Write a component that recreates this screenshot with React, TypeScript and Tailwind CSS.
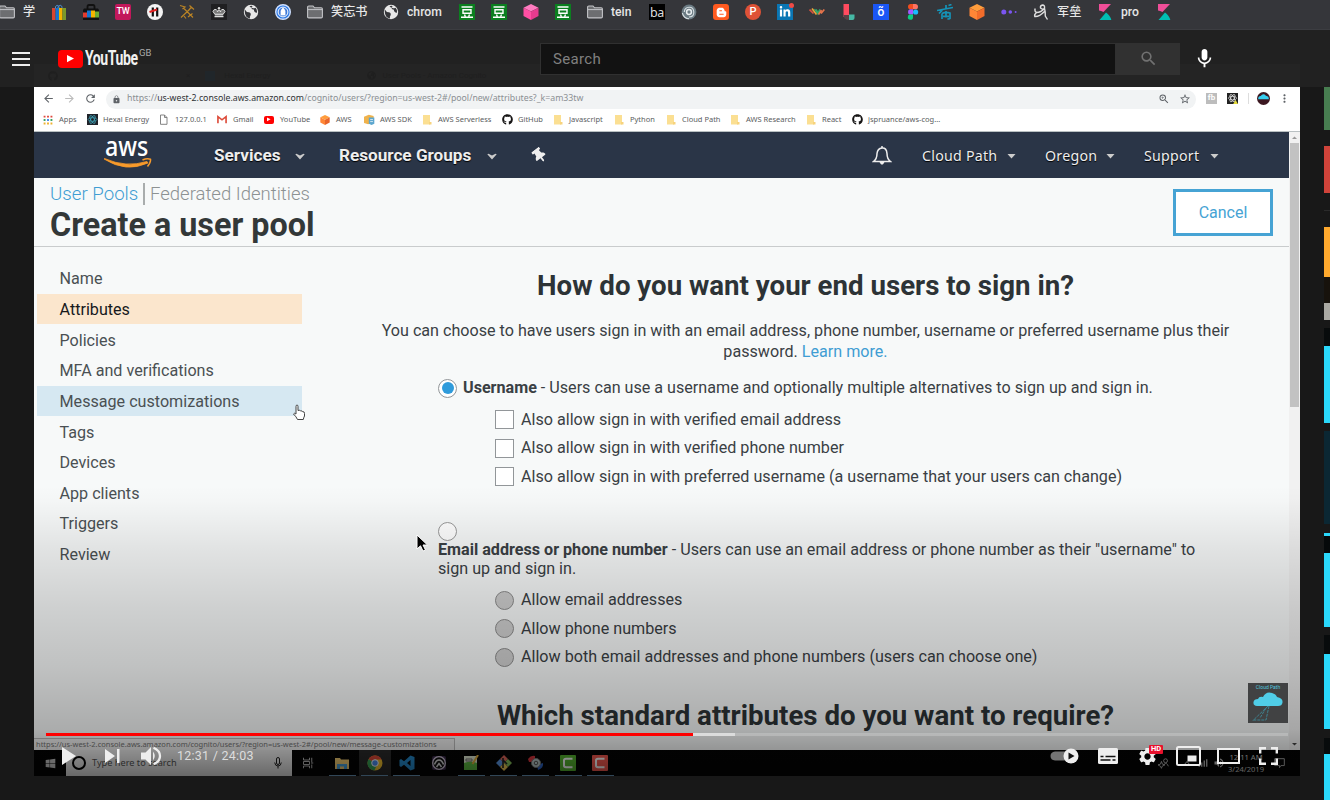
import React from "react";
import { FaGithub, FaBloggerB, FaLinkedinIn, FaGlobeAmericas, FaWindows, FaThumbtack } from "react-icons/fa";
import { MdMic, MdSearch, MdVolumeUp, MdSettings, MdLock, MdZoomIn, MdStarBorder, MdMoreVert, MdRefresh, MdArrowBack, MdArrowForward } from "react-icons/md";

const Svg = ({ children, w = 16, h = 16, vb = "0 0 16 16" }: { children: React.ReactNode; w?: number; h?: number; vb?: string }) => (
  <svg width={w} height={h} viewBox={vb} className="shrink-0" fill="none">{children}</svg>
);

const Folder = () => (
  <Svg>
    <path d="M.6 3.200Q.6 2 1.800 2H6L7.500 3.800H14.200Q15.400 3.800 15.400 5V12.700Q15.400 13.900 14.200 13.900H1.800Q.6 13.900 .6 12.700Z" fill="#6d6e71" stroke="#c3c4c7" strokeWidth="1.100" />
    <path d="M1 5.600H15" stroke="#c3c4c7" strokeWidth="1" />
  </Svg>
);
const Globe = () => (
  <Svg>
    <circle cx="8" cy="8" r="7.200" fill="#e8e8e8" />
    <path d="M1.800 5.500Q3.500 8.500 6 8.300Q8.500 9 7.500 11.500Q6.500 12.500 7 14.500Q2 13.500 1.800 8Z" fill="#35363a" />
    <path d="M6.500 2.300Q9 1.300 9.500 2.500Q8 4 9 5.200Q11.500 4.800 11 7Q12.500 9.500 14 8.500Q14.300 5.500 12.500 3.800Q10 5 8.500 3.500Q7.500 3.500 6.500 2.300Z" fill="#35363a" />
  </Svg>
);
const Dou = () => (
  <Svg>
    <rect width="16" height="16" fill="#0b7f1f" />
    <path d="M2.500 3H13.500M2 13.200H14M4 5.700H12V9.300H4ZM5.500 10.500L6.300 12.500M10.500 10.500L9.700 12.500" stroke="#fff" strokeWidth="1.400" />
  </Svg>
);
const Kib = () => (
  <Svg>
    <path d="M2 0H14L6.500 8Q4 6.500 2 6.500Z" fill="#f04e98" />
    <path d="M2.500 16L9 8.500Q13 11 14.300 16Z" fill="#00bfb3" />
  </Svg>
);
const Bag = ({ wide = false }: { wide?: boolean }) => wide ? (
  <Svg>
    <path d="M4.500 5V2.800Q4.500 1 6 1H10Q11.500 1 11.500 2.800V5" stroke="#111" strokeWidth="1.800" />
    <path d="M1 4.500H15L16 6V16H0V6Z" fill="#111" />
    <path d="M0 8.500H4V13.500H0Z" fill="#e33b2e" /><path d="M4 6.500H8V13.500H4Z" fill="#1574d0" /><path d="M8 6.500H12V13.500H8Z" fill="#f4b400" /><path d="M12 7.500H16V13.500H12Z" fill="#6cab32" />
  </Svg>
) : (
  <Svg>
    <path d="M4.500 5V2.500Q6 0 8 2.500V5M7 5V2.500Q9.500 0 11 2.500V5" stroke="#4b8ed0" strokeWidth="1" />
    <path d="M1 4H4.500V16H1Z" fill="#d8452f" /><path d="M4.500 4H8V16H4.500Z" fill="#1574d0" /><path d="M8 4H11.500V16H8Z" fill="#f4b400" /><path d="M11.500 4H15V16H11.500Z" fill="#7a9a2c" />
  </Svg>
);
const Box = ({ a, b, c }: { a: string; b: string; c: string }) => (
  <Svg>
    <path d="M8 0L15.500 3.700L8 7.500L0.500 3.700Z" fill={a} />
    <path d="M0.500 3.700L8 7.500V16L0.500 12Z" fill={b} />
    <path d="M15.500 3.700L8 7.500V16L15.500 12Z" fill={c} />
  </Svg>
);

const bar: { i: React.ReactNode; t?: string; w?: string }[] = [
  { i: <Folder />, t: "学", w: "w-3" },
  { i: <Bag /> },
  { i: <Bag wide /> },
  { i: <span className="flex size-4 items-center justify-center rounded-[2px] bg-[#c2185b] text-[9px] tracking-[-0.200px] text-white">TW</span> },
  { i: <Svg><circle cx="8" cy="8" r="8" fill="#f4f4f4" /><path d="M5.800 3.500V12.500M10.200 3.500V12.500" stroke="#111" strokeWidth="2.200" /><path d="M2.500 8L10 5.500" stroke="#e02020" strokeWidth="1.900" /></Svg> },
  { i: <Svg><path d="M2 13.500L10.500 5.500M4.500 4L14 13.500M1 1.500L6 3L3.500 5M10.500 1.500L15 5.500M9.500 6.500L12.500 3M5 12L7 14.500M9 13L13.500 9.500" stroke="#b98325" strokeWidth="1.200" /></Svg> },
  { i: <Svg><rect width="16" height="16" fill="#1f1f21" /><path d="M3.500 12.700H12.500M3.800 10.800H12.200" stroke="#ddd" strokeWidth="1.200" /><path d="M3.800 10.200L2 7.500Q3 4.600 5.200 5.500Q6.500 6.500 6.500 8Q7 6 8 6T9.500 8Q9.500 6.500 10.800 5.500Q13 4.600 14 7.500L12.200 10.200Z" fill="#777" stroke="#ddd" strokeWidth="1" /><circle cx="8" cy="4.200" r="1.200" fill="#ddd" /></Svg> },
  { i: <Globe /> },
  { i: <Svg><circle cx="8" cy="8" r="7.300" fill="#2f7ce8" stroke="#cfe0ff" strokeWidth="1.400" /><circle cx="8" cy="8" r="4.900" fill="#3f79d8" stroke="#fff" strokeWidth="1" /><path d="M6 6.500H10V11H6ZM6.800 7V5Q8 3.700 9.200 5V7" fill="#fff" stroke="#fff" strokeWidth=".8" /></Svg> },
  { i: <Folder />, t: "笑忘书", w: "w-9" },
  { i: <Globe />, t: "chrom", w: "w-9" },
  { i: <Dou /> },
  { i: <Dou /> },
  { i: <Box a="#ff7cc0" b="#ff4fa3" c="#e63b8e" /> },
  { i: <Dou /> },
  { i: <Folder />, t: "tein", w: "w-[22px]" },
  { i: <span className="flex size-4 items-end justify-center bg-black font-['Noto_Sans',sans-serif] text-[12.500px] font-normal leading-[15px] tracking-[-0.300px] text-[#ddd]">ba</span> },
  { i: <Svg><circle cx="8" cy="8" r="7.400" fill="#6b7b83" /><circle cx="8" cy="8" r="2.400" stroke="#e9eef0" strokeWidth="1.500" /><path d="M3.300 8Q3.500 3.400 8 3.200T12.800 8T8 13M1.300 9Q3 14.500 8 14.800" stroke="#d5dde0" strokeWidth="1.100" /></Svg> },
  { i: <span className="flex size-4 items-center justify-center rounded-[3px] bg-[#ff5a1f] text-[11px] text-white"><FaBloggerB /></span> },
  { i: <span className="flex size-4 items-center justify-center rounded-full bg-[#de5236] text-[11px] text-white">P</span> },
  { i: <span className="relative flex size-4 items-center justify-center bg-[#0a76b4] text-[12px] text-white"><FaLinkedinIn /><i className="absolute -right-[1px] -top-[1px] size-[5px] rounded-full bg-[#f04a45]" /></span> },
  { i: <Svg><path d="M.5 5.500L4.500 9.500" stroke="#d85140" strokeWidth="1.700" /><path d="M3 4.500L7.500 10.500" stroke="#e8a53a" strokeWidth="1.700" /><path d="M7 5.500L9 9.500L11 5.500" stroke="#2fa866" strokeWidth="1.700" /><path d="M9.500 10.500L12.500 6M12 9.500L15.300 5.500" stroke="#e5734b" strokeWidth="1.700" /><path d="M5.500 5L8 9" stroke="#3aa675" strokeWidth="1.300" /></Svg> },
  { i: <Svg><path d="M2.500 0H8V13H2.500Z" fill="#ff4b5f" /><path d="M2.500 11H8V16Q2.500 16 2.500 11Z" fill="#574145" /><path d="M8 10.500H13.500V14Q13.500 16 11.500 16H8Z" fill="#46b9a5" /></Svg> },
  { i: <span className="flex size-4 items-center justify-center bg-[#1a56f5] text-[12px] leading-none text-white">õ</span> },
  { i: <Svg><path d="M8 0H5.700a2.600 2.600 0 0 0 0 5.300H8Z" fill="#f24e1e" /><path d="M8 0h2.300a2.600 2.600 0 0 1 0 5.300H8Z" fill="#ff7262" /><path d="M8 5.300H5.700a2.600 2.600 0 0 0 0 5.300H8Z" fill="#a259ff" /><circle cx="10.600" cy="8" r="2.600" fill="#1abcfe" /><path d="M8 10.600H5.700a2.600 2.600 0 1 0 2.300 2.600Z" fill="#0acf83" /></Svg> },
  { i: <Svg><path d="M0 6.500L16 3.500M9 1V4.500M2 9.500L5.500 6M5 9.500V15M5 9.500Q9 7.500 13 9V14.500Q12 15.500 10.500 14.500M9 7V13.500M6 12.300H12M11.500 1.500L14.500 .5" stroke="#1593b8" strokeWidth="1.700" /></Svg> },
  { i: <Box a="#ff9d3c" b="#ff8636" c="#f26c2a" /> },
  { i: <Svg><circle cx="2.800" cy="8" r="2.500" fill="#7b55f0" /><circle cx="9.300" cy="8" r="1.800" fill="#7b55f0" /><circle cx="14.600" cy="8" r="1" fill="#7b55f0" /></Svg> },
  { i: <Svg><path d="M2 4.500Q1.500 7.500 3.500 8.500Q8 8.500 11.500 4.500Q12 1 9.500 1Q7 1.500 7.500 4Q9.500 6 11.500 4.500Q12.500 8 12.300 12L14.500 15.500M3.500 8.500Q1 10.500 1.800 12.500Q6 13 11.500 7.500" stroke="#dedede" strokeWidth="1.400" /></Svg>, t: "军垒", w: "w-6" },
  { i: <Kib />, t: "pro", w: "w-[19px]" },
  { i: <Kib /> },
];

const Note = () => <Svg w={10} h={11} vb="0 0 10 11"><path d="M1 1H8V10.500H1Z" fill="#fbdf92" /><path d="M7 8H9.500V10.500H7Z" fill="#f7d37d" /></Svg>;
const Yt = ({ c = "h-[8px] w-[10px] rounded-[2px]" }: { c?: string }) => (
  <span className={"flex shrink-0 items-center justify-center bg-[#f00] text-white " + c}><svg width="36%" viewBox="0 0 8 10"><path d="M0 1L8 5.200L0 9.500Z" fill="#fff" /></svg></span>
);
const Gh = () => <FaGithub className="size-[11px] shrink-0 text-[#171515]" />;
const Atom = () => (
  <Svg w={11} h={11}><rect width="16" height="16" fill="#20232a" /><g stroke="#3fa9bd" strokeWidth="1"><ellipse cx="8" cy="8" rx="6.500" ry="2.600" /><ellipse cx="8" cy="8" rx="6.500" ry="2.600" transform="rotate(60 8 8)" /><ellipse cx="8" cy="8" rx="6.500" ry="2.600" transform="rotate(120 8 8)" /></g></Svg>
);

const inner: { i: React.ReactNode; t: string; w: string }[] = [
  { i: <Svg w={10} h={10}><g><path d="M1 1h3v3H1zM6.500 1h3v3h-3zM12 1h3v3h-3z" fill="#e0483c" /><path d="M1 6.500h3v3H1zM12 6.500h3v3h-3z" fill="#3da364" /><path d="M6.500 6.500h3v3h-3z" fill="#4285f4" /><path d="M1 12h3v3H1zM6.500 12h3v3h-3zM12 12h3v3h-3z" fill="#efb22e" /></g></Svg>, t: "Apps", w: "w-11" },
  { i: <Atom />, t: "Hexal Energy", w: "w-[72px]" },
  { i: <Svg w={10} h={11} vb="0 0 10 11"><path d="M1.500 1H5.500L8 3.500V10.300H1.500ZM5.500 1V3.500H8" stroke="#777" strokeWidth=".9" /></Svg>, t: "127.0.0.1", w: "w-[58px]" },
  { i: <Svg w={10} h={9} vb="0 0 16 13"><path d="M1.500 12.500V2L8 7L14.500 2V12.500" stroke="#dd4b39" strokeWidth="2.600" /></Svg>, t: "Gmail", w: "w-[47px]" },
  { i: <Yt />, t: "YouTube", w: "w-14" },
  { i: <span className="flex size-[10px] items-center [&>svg]:size-[10px]"><Box a="#ff9d3c" b="#ff8636" c="#e8652a" /></span>, t: "AWS", w: "w-11" },
  { i: <Svg w={11} h={11}><path d="M0 4L7 1L14 3V12L6 15L0 13Z" fill="#efb24c" /><path d="M7 5H15V14L11 16L7 14Z" fill="#5da7cf" /><path d="M9 8H13M9 11H13" stroke="#fff" /></Svg>, t: "AWS SDK", w: "w-[58px]" },
  { i: <Note />, t: "AWS Serverless", w: "w-20" },
  { i: <Gh />, t: "GitHub", w: "w-[51px]" },
  { i: <Note />, t: "Javascript", w: "w-[61px]" },
  { i: <Note />, t: "Python", w: "w-[52px]" },
  { i: <Note />, t: "Cloud Path", w: "w-16" },
  { i: <Note />, t: "AWS Research", w: "w-[76px]" },
  { i: <Note />, t: "React", w: "w-[46px]" },
  { i: <Gh />, t: "jspruance/aws-cog...", w: "w-24" },
];

const Caret = () => <svg width="9" height="6" viewBox="0 0 9 6" className="mt-[2px] shrink-0"><path d="M0.500 1H8.500L4.500 5.500Z" fill="#ccc" /></svg>;
const Chevron = () => <svg width="10" height="7" viewBox="0 0 10 7" className="mt-[3px] shrink-0"><path d="M0.300 1.300L1.500 .8L5 2.500L8.500 .8L9.700 1.300L5 6.500Z" fill="#ccc" /></svg>;

const Check = ({ round = false, text }: { round?: boolean; text: string }) => (
  <div className="flex h-[28.500px] items-center gap-[7px]">
    <span className={round ? "size-[19px] rounded-full border border-[#8d8d8d] bg-[#cfcfcf]" : "size-[19px] border border-[#929699] bg-white"} />
    <span>{text}</span>
  </div>
);

const menu = ["Name", "Attributes", "Policies", "MFA and verifications", "Message customizations", "Tags", "Devices", "App clients", "Triggers", "Review"];

const strips = [
  "h-[43px] bg-[#477d50]", "mt-[16px] h-[47px] bg-[#d0433a]", "mt-[17px] h-px bg-[#2b2b2b]", "mt-[16px] h-[50px] bg-[#ffa92d]",
  "h-[26px] bg-[#17120c]", "h-[17px] bg-[#aaa9a3]", "mt-[8px] h-[18px] bg-[#080b0c]", "h-[77px] bg-[#2ad8fb]", "mt-[8px] h-[93px] bg-[#0b2733]",
  "mt-[9px] h-[3px] bg-[#2ad8fb]", "h-[17px] bg-[#06090a]", "h-[74px] bg-[#2ad8fb]", "mt-[8px] h-[19px] bg-[#080b0c]", "h-[75px] bg-[#2ad8fb]",
  "mt-[9px] h-[16px] bg-[#080b0c]", "h-[48px] bg-[#2ad8fb]",
];

const Task = ({ children, on = true, hot = false }: { children: React.ReactNode; on?: boolean; hot?: boolean }) => (
  <div className={"flex h-[26px] w-[32.250px] flex-col items-center " + (hot ? "bg-[#2a2a2a]" : "")}>
    <div className="flex h-[25px] items-center">{children}</div>
    <div className={on ? "h-px w-[27px] bg-[#6f9fc4]" : "h-px w-[27px]"} />
  </div>
);

export default function App() {
  return (
    <div className="flex h-[800px] w-[1330px] flex-col overflow-hidden bg-[#181818] font-['Roboto',sans-serif]">
      {/* bookmarks */}
      <div className="flex h-[30px] shrink-0 items-start gap-4 border-b border-[#3c3d41] bg-[#35363a] pt-[4px] font-['Roboto','Noto_Sans_CJK_SC',sans-serif] text-[12.200px] font-medium text-[#e6e6e6]">
        {bar.map((b, i) => (
          <div key={i} className={"flex h-4 shrink-0 items-center gap-2 " + (i === 0 ? "-ml-px" : "")}>
            {b.i}
            {b.t && <span className={"whitespace-nowrap leading-4 " + b.w}>{b.t}</span>}
          </div>
        ))}
      </div>

      {/* masthead */}
      <div className="relative flex h-[57px] shrink-0 items-center bg-[#212121]">
        <div className="absolute bottom-0 left-[34px] flex h-[23px] w-[1266px] items-center bg-[#242424] text-[8px] text-[#1f1f1f]">
          <FaGithub className="ml-[14px] size-[10px]" />
          <span className="ml-[128px]">×</span>
          <span className="ml-[15px] size-[10px] bg-[#20262a]" />
          <span className="ml-[9px]">Hexal Energy</span>
          <FaGlobeAmericas className="ml-[96px] size-[9px]" />
          <span className="ml-[7px] whitespace-nowrap">User Pools - Amazon Cognito</span>
        </div>
        <div className="relative ml-3 flex w-[18px] flex-col gap-[4px]">
          <i className="h-[2px] bg-[#eee]" /><i className="h-[2px] bg-[#eee]" /><i className="h-[2px] bg-[#eee]" />
        </div>
        <div className="relative ml-[28px] flex w-[483px] items-center">
          <Yt c="h-[18px] w-[25px] rounded-[4px] [&>svg]:w-[7px]" />
          <span className="ml-[2px] w-[52px] origin-left scale-x-[0.72] scale-y-[1.060] whitespace-nowrap text-[19.500px] font-bold leading-none tracking-[-0.600px] text-[#f1f1f1]">YouTube</span>
          <span className="ml-[2px] mt-[-12px] text-[9.500px] leading-none text-[#aaa]">GB</span>
        </div>
        <div className="relative -ml-px flex h-[32px] w-[576px] items-center border border-[#303030] bg-[#121212] pl-[12px] pt-px text-[15px] tracking-[0.350px] text-[#808080]">Search</div>
        <div className="relative flex h-[32px] w-[64px] items-center justify-center bg-[#313131] text-[#717171]"><MdSearch size={19} /></div>
        <MdMic size={23} className="relative ml-[13px] text-white" />
      </div>

      <div className="flex h-[713px] shrink-0 justify-between pl-[34px]">
        {/* player */}
        <div className="relative flex h-[689px] w-[1266px] flex-col bg-[#f7f9f9]">
          {/* browser chrome */}
          <div className="flex h-[22px] shrink-0 items-center bg-white pl-[8px] font-['Noto_Sans',sans-serif] text-[#5f6368]">
            <MdArrowBack size={13} /><MdArrowForward size={13} className="ml-[8px] text-[#bbb]" /><MdRefresh size={13} className="ml-[8px]" />
            <div className="ml-[9px] mt-[2px] flex h-[19px] w-[1090px] items-center rounded-full bg-[#f1f3f4] pl-[6px]">
              <MdLock size={9} />
              <span className="ml-[6px] whitespace-nowrap text-[8.750px] text-[#8b8f93]">https://<b className="font-normal text-[#2f3235]">us-west-2.console.aws.amazon.com</b>/cognito/users/?region=us-west-2#/pool/new/attributes?_k=am33tw</span>
              <span className="ml-auto mr-[5px] flex items-center gap-[9px]"><MdZoomIn size={12} /><MdStarBorder size={12} /></span>
            </div>
            <span className="ml-[10px] flex size-[11px] items-center justify-center bg-[#bdbdbd] font-['Roboto'] text-[8px] font-bold text-white">fb</span>
            <span className="ml-[10px]"><Svg w={11} h={11}><rect width="16" height="16" fill="#222" /><g stroke="#ddd" strokeWidth="1.100"><ellipse cx="8" cy="7.500" rx="6" ry="2.500" /><ellipse cx="8" cy="7.500" rx="6" ry="2.500" transform="rotate(60 8 7.500)" /><ellipse cx="8" cy="7.500" rx="6" ry="2.500" transform="rotate(120 8 7.500)" /></g><path d="M12.500 10L16 16H9Z" fill="#e5dc3c" /></Svg></span>
            <span className="ml-[10px] h-[11px] w-px bg-[#ddd]" />
            <span className="ml-[8px]"><Svg w={13} h={13}><circle cx="8" cy="8" r="8" fill="#3c1720" /><path d="M1.500 9Q1 5.500 4.500 5Q7.500 1 11 4.500Q15 5 14.500 9Z" fill="#38cdee" /></Svg></span>
            <MdMoreVert size={13} className="ml-[8px]" />
          </div>
          <div className="flex h-[23px] shrink-0 items-center border-b border-[#b9c0c2] bg-white pb-px pl-[9px] font-['Noto_Sans',sans-serif] text-[7.500px] text-[#5a5d60]">
            {inner.map((b, i) => (
              <div key={i} className={"flex shrink-0 items-center whitespace-nowrap " + b.w}>
                <span className="flex w-[16px] shrink-0 items-center">{b.i}</span>{b.t}
              </div>
            ))}
          </div>

          <div className="flex h-[618px] shrink-0">
            <div className="flex w-[1255px] flex-col">
              {/* console nav */}
              <div className="flex h-[46px] shrink-0 items-center bg-[#2a3547] text-[17.150px] font-bold text-[#eee] [text-shadow:0_1px_1px_#000]">
                <div className="ml-[70px] flex h-[46px] w-[110px] flex-col">
                  <span className="ml-px h-[26px] w-[60px] origin-left scale-x-[0.860] font-['Noto_Sans',sans-serif] text-[27px] font-medium leading-[28px] text-white [text-shadow:none]">aws</span>
                  <svg width="48" height="14" viewBox="0 0 48 14">
                    <path d="M0 1Q22 15 44 5L43 3.500Q22 10 0.500 .5Z" fill="#f79a2b" stroke="#f79a2b" strokeWidth=".8" />
                    <path d="M38.500 2Q43 0 46.500 1.200Q47 4 43.500 8.500" stroke="#f79a2b" strokeWidth="1.500" fill="none" />
                  </svg>
                </div>
                <span className="w-[67px] whitespace-nowrap pt-px">Services</span><span className="ml-[14px] flex"><Chevron /></span>
                <span className="ml-[34px] w-[133px] whitespace-nowrap pt-px">Resource Groups</span><span className="ml-[15px] flex"><Chevron /></span>
                <FaThumbtack size={15} className="ml-[35px] -rotate-[38deg]" />
                <svg width="20" height="21" viewBox="0 0 20 21" className="ml-[325px]" fill="none"><path d="M1.500 16.500Q5 14 5 8.500Q5.500 3.500 10 3T15 8.500Q15 14 18.500 16.500Z" stroke="#eee" strokeWidth="1.500" /><path d="M10 1V3" stroke="#eee" strokeWidth="1.500" /><path d="M7.500 17Q10 22.500 12.500 17Z" fill="#eee" /></svg>
                <div className="ml-[30px] flex items-center pt-px font-['Noto_Sans',sans-serif] text-[14.200px] font-normal tracking-[0.250px]">
                  <span className="w-[85px] whitespace-nowrap">Cloud Path</span><Caret />
                  <span className="ml-[29px] w-[61px] whitespace-nowrap">Oregon</span><Caret />
                  <span className="ml-[29px] w-[66px] whitespace-nowrap">Support</span><Caret />
                </div>
              </div>
              {/* page header */}
              <div className="flex h-[69px] shrink-0 items-start justify-between border-b border-[#c9cccd] pl-[16px] pr-[16px]">
                <div className="flex flex-col pt-[4px] text-[#333838]">
                  <div className="flex h-[23px] items-center text-[18.500px] font-light leading-none"><span className="w-[93px] whitespace-nowrap pt-[2px] text-[18.700px] text-[#3f9dd3]">User Pools</span><span className="h-[22px] w-[2px] bg-[#a9adad]" /><span className="ml-[5px] whitespace-nowrap pt-[2px] text-[#8d9293]">Federated Identities</span></div>
                  <div className="mt-[3px] whitespace-nowrap text-[32.350px] font-bold leading-[34px]">Create a user pool</div>
                </div>
                <div className="mt-[11px] flex h-[47px] w-[100px] items-center justify-center border-[3px] border-[#46a3d4] bg-white text-[16px] text-[#46a3d4]">Cancel</div>
              </div>
              {/* page body */}
              <div className="flex h-[491px] shrink-0 text-[16.140px] text-[#3a4044]">
                <div className="flex w-[268px] flex-col pl-[3px] pt-[16px]">
                  {menu.map((m, i) => (
                    <div key={m} className={"flex h-[30.670px] shrink-0 items-center whitespace-nowrap pl-[22.500px] pt-[2px] " + (i === 1 ? "bg-[#fbe6cd] text-[#16191c]" : i === 4 ? "bg-[#d6e8f2] text-[#4a5053]" : "text-[#4a5053]")}>{m}</div>
                  ))}
                </div>
                <div className="flex flex-1 flex-col overflow-hidden pl-[136px]">
                  <div className="-ml-[136px] mt-[22px] flex h-[34px] shrink-0 translate-x-[10px] items-center justify-center text-[27.650px] font-bold text-[#2d3336]">How do you want your end users to sign in?</div>
                  <div className="-ml-[136px] mt-[18px] translate-x-[10px] whitespace-nowrap text-center leading-[20.500px]">You can choose to have users sign in with an email address, phone number, username or preferred username plus their<br />password. <span className="text-[#3f9dd3]">Learn more.</span></div>
                  <div className="mt-[16px] flex h-[20px] items-center whitespace-nowrap"><span className="mr-[6px] flex size-[19px] items-center justify-center rounded-full border border-[#929699] bg-white"><i className="size-[12px] rounded-full bg-[#2f9bdb]" /></span><b>Username</b>&nbsp;- Users can use a username and optionally multiple alternatives to sign up and sign in.</div>
                  <div className="mt-[7.500px] flex flex-col whitespace-nowrap pl-[57px]">
                    <Check text="Also allow sign in with verified email address" /><Check text="Also allow sign in with verified phone number" /><Check text="Also allow sign in with preferred username (a username that your users can change)" />
                  </div>
                  <div className="mt-[31px] size-[19px] shrink-0 rounded-full border border-[#999] bg-white" />
                  <div className="whitespace-nowrap leading-[18.500px]"><b>Email address or phone number</b> - Users can use an email address or phone number as their "username" to<br />sign up and sign in.</div>
                  <div className="mt-[8px] flex flex-col whitespace-nowrap pl-[57px]">
                    <Check round text="Allow email addresses" /><Check round text="Allow phone numbers" /><Check round text="Allow both email addresses and phone numbers (users can choose one)" />
                  </div>
                  <div className="-ml-[136px] mt-[27px] flex h-[34px] shrink-0 translate-x-[10px] items-center justify-center text-[27.650px] font-bold text-[#2d3336]">Which standard attributes do you want to require?</div>
                </div>
              </div>
              <div className="flex h-[12px] w-[421px] shrink-0 items-center border-r border-t border-[#bbb] bg-[#f2f2f2] pb-px pl-[2px] font-['Noto_Sans',sans-serif] text-[7.500px] leading-[10px] text-[#777]"><span className="whitespace-nowrap">https://us-west-2.console.aws.amazon.com/cognito/users/?region=us-west-2#/pool/new/message-customizations</span></div>
            </div>
            {/* scrollbar */}
            <div className="flex w-[11px] flex-col items-center bg-[#f1f1f1]">
              <svg width="11" height="11" viewBox="0 0 11 11"><path d="M3 7L5.500 4.500L8 7Z" fill="#999" /></svg>
              <div className="h-[264px] w-[9px] bg-[#c2c2c2]" />
              <svg width="11" height="11" viewBox="0 0 11 11" className="mt-auto"><path d="M3 4L5.500 6.500L8 4Z" fill="#444" /></svg>
            </div>
          </div>

          {/* windows taskbar */}
          <div className="flex h-[26px] shrink-0 items-center bg-[#040404]">
            <div className="flex w-8 justify-center text-[#c8c8c8]"><FaWindows size={11} /></div>
            <div className="flex h-[26px] w-[226px] items-center bg-[#eee] text-[#555] font-['Noto_Sans',sans-serif]">
              <span className="ml-[6px] size-[14px] rounded-full border-2 border-black" />
              <span className="ml-[6px] whitespace-nowrap text-[9.200px]">Type here to search</span>
              <svg width="8" height="12" viewBox="0 0 8 12" className="ml-auto mr-[10px]" fill="none"><rect x="2.500" y=".5" width="3" height="7" rx="1.500" stroke="#222" /><path d="M.7 5.500Q1 9 4 9T7.300 5.500M4 9V11.500" stroke="#222" /></svg>
            </div>
            <Task on={false}><Svg w={12} h={12}><path d="M2 1V4H10V1M2 15V12H10V15M2 6H10V10H2ZM13 1V7M13 10V15M12 8H15" stroke="#c8c8c8" strokeWidth="1.200" /></Svg></Task>
            <div className="ml-[2px] flex">
              <Task><Svg><path d="M1 3H6L7 4.500H15V14H1Z" fill="#f4ce74" /><path d="M3 9H13V14H10V11.500H6V14H3Z" fill="#4ba3dc" /></Svg></Task>
              <Task hot><Svg><circle cx="8" cy="8" r="7.500" fill="#f2c12e" /><path d="M8 8L1.500 4.200A7.500 7.500 0 0 1 14.600 4.500H8Z" fill="#e04838" /><path d="M8 8L1.500 4.200A7.500 7.500 0 0 0 7.300 15.500L10 10Z" fill="#37a457" /><circle cx="8" cy="8" r="3.300" fill="#4a8df0" stroke="#fff" strokeWidth="1" /></Svg></Task>
              <Task><Svg><path d="M11.500 0.500L15.500 2V14L11.500 15.500L5 9.700L2 12L.5 11V5L2 4L5 6.300ZM11.500 5L8 8L11.500 11Z" fill="#2489ca" fillRule="evenodd" /></Svg></Task>
              <Task on={false}><Svg><rect x="1" y="1" width="14" height="14" rx="2" fill="#3a2a4a" /><circle cx="8" cy="8" r="6.300" fill="#111" stroke="#d5c9dd" strokeWidth="1.300" /><path d="M3.500 9.500Q5 5 8 5T12.500 9.500M5.500 12L8 8.500L10.500 12" stroke="#ddd" strokeWidth="1.500" /></Svg></Task>
              <Task><Svg><path d="M1 1H14V15H1Z" fill="#e3ecd5" /><path d="M1 8Q8 5 14 8V15H1Z" fill="#5fbd43" /><path d="M15 0L9.500 9" stroke="#e2ae3b" strokeWidth="2" /><path d="M3 4H9V6H3Z" stroke="#777" /></Svg></Task>
              <Task><Svg><path d="M8 0L12 4L8 8L4 4Z" fill="#de6659" /><path d="M4 4L8 8L4 12L0 8Z" fill="#5c98e5" /><path d="M12 4L16 8L12 12L8 8Z" fill="#86c25b" /><path d="M8 8L12 12L8 16L4 12Z" fill="#efca57" /><path d="M7 3V13M7 5L11 9" stroke="#222" strokeWidth="1.600" /></Svg></Task>
              <Task><Svg><path d="M0 4Q3 0 7 1V7H1Z" fill="#d8343b" /><path d="M9 10L15 8Q16 13 10 15Z" fill="#2d64c4" /><circle cx="8" cy="8" r="4.500" fill="#bcc" stroke="#777" /><circle cx="8" cy="8" r="1.800" stroke="#555" /></Svg></Task>
              <Task><Svg><rect width="16" height="16" rx="1" fill="#55b32f" /><path d="M12.500 3.800H6Q4 3.800 4 5.500V10.500Q4 12.200 6 12.200H12.500" stroke="#fff" strokeWidth="2" /></Svg></Task>
              <Task><Svg><rect width="16" height="16" rx="1" fill="#f4594f" /><path d="M12.500 3.800H6Q4 3.800 4 5.500V10.500Q4 12.200 6 12.200H12.500" stroke="#fff" strokeWidth="2" /></Svg></Task>
            </div>
            <div className="ml-auto mr-[15px] flex items-center text-[#ccc]">
              <Svg w={11} h={11}><circle cx="11" cy="4" r="2.800" stroke="#ccc" strokeWidth="1.200" /><path d="M9 9Q13 6 15 12M5 5L6.500 9L10 10L6 12L5 15L3.500 12L0 10L3.500 9Z" stroke="#ccc" strokeWidth="1.200" /></Svg>
              <svg width="8" height="6" viewBox="0 0 8 6" className="ml-[14px]" fill="none"><path d="M1 5L4 1.500L7 5" stroke="#ccc" /></svg>
              <span className="ml-[7px]"><Svg w={10} h={10}><path d="M2 14V10M6 14V7M10 14V4M14 14V2" stroke="#ccc" strokeWidth="2" /></Svg></span>
              <MdVolumeUp size={12} className="ml-[5px]" />
              <div className="ml-[3px] w-[36px] whitespace-nowrap text-center font-['Noto_Sans',sans-serif] text-[7.600px] leading-[12px]">12:11 AM<br />3/24/2019</div>
              <span className="ml-[10px]"><Svg w={11} h={11}><path d="M1 1H15V11H10L8 14V11H1Z" stroke="#ccc" strokeWidth="1.200" /></Svg></span>
            </div>
          </div>

          {/* shading and controls */}
          <div className="pointer-events-none absolute inset-x-0 bottom-0 h-[290px] bg-[linear-gradient(to_bottom,rgba(0,0,0,0)_0%,rgba(0,0,0,0.010)_5%,rgba(0,0,0,0.090)_22%,rgba(0,0,0,0.165)_42%,rgba(0,0,0,0.225)_62%,rgba(0,0,0,0.310)_84%,rgba(0,0,0,0.400)_91%,rgba(0,0,0,0.560)_100%)]" />
          <svg width="13" height="19" viewBox="0 0 13 19" className="absolute left-[382px] top-[447px]"><path d="M1 1V15L4.500 11.800L7 17L9.500 16L7 11H11.500Z" fill="#000" stroke="#fff" strokeWidth="1" /></svg>
          <svg width="14" height="17" viewBox="0 0 14 17" className="absolute left-[258px] top-[317px]"><path d="M4 10V2.500Q4 1 5 1T6 2.500V6.500Q8 5.500 8.500 7Q10.500 6.500 10.700 7.700Q12.500 7.300 12.500 9.500V12Q11.500 14 11.300 15.500H5.500Q4.500 13 1.500 10Q2 8.500 4 10Z" fill="#fff" stroke="#444" strokeWidth="1" /></svg>
          <div className="absolute left-[1214px] top-[596px] flex h-[40px] w-[40px] flex-col items-center bg-[#414243]">
            <span className="whitespace-nowrap text-[5px] leading-[8px] text-[#52c6df]">Cloud Path</span>
            <svg width="34" height="31" viewBox="0 0 34 31" fill="none"><path d="M6 15Q2 15 2.500 11Q3 8 7 8Q8 5 12 6Q15 0 21 2Q25 3 26 6Q32 7 31.500 11.500Q31 15 27 15Z" fill="#50cde7" /><path d="M17 15L2 29.500M18 15L15 29H2M15 17L9 27" stroke="#3d93a3" strokeWidth=".8" strokeDasharray="3 1" /></svg>
          </div>
          <div className="absolute left-[12px] top-[646px] flex h-[3px] w-[1242px] bg-white/20"><div className="w-[647px] bg-[#f00]" /><div className="w-[42px] bg-white/50" /></div>
          <div className="absolute left-[12px] top-[651px] flex h-[36px] w-[1242px] items-center text-[#eee]">
            <svg width="16" height="20" viewBox="0 0 16 20" className="ml-[15px]"><path d="M1 1L15 10L1 19Z" fill="#eee" /></svg>
            <svg width="15" height="14" viewBox="0 0 15 14" className="ml-[28px]"><path d="M0 0L10 7L0 14ZM12 0H14.500V14H12Z" fill="#eee" /></svg>
            <svg width="21" height="20" viewBox="0 0 21 20" className="ml-[21px]" fill="none"><path d="M0 6.500H4.500L10 1V19L4.500 13.500H0Z" fill="#eee" /><path d="M12 5.500Q15.500 10 12 14.500Z" fill="#eee" /><path d="M12.500 1.700Q19 4.500 19 10T12.500 18.300" stroke="#eee" strokeWidth="2.300" /></svg>
            <span className="ml-[15px] whitespace-nowrap text-[12.500px] tracking-[0.250px] text-[#ddd]">12:31 / 24:03</span>
            <div className="relative ml-auto mr-[10px] flex items-center">
              <svg width="29" height="16" viewBox="0 0 29 16" fill="none"><path d="M5 3.500H18V12.500H5Q.5 12 .5 8T5 3.500Z" fill="#747474" /><circle cx="21" cy="8" r="7.500" fill="#eee" /><path d="M18.500 4.500L24.500 8L18.500 11.500Z" fill="#111" /></svg>
              <svg width="20" height="16" viewBox="0 0 20 16" className="ml-[19px]" fill="none"><rect width="20" height="16" rx="1.500" fill="#eee" /><path d="M2.500 8.500H5.500M7.500 8.500H17.500M2.500 12H12.500M14.500 12H17.500" stroke="#111" strokeWidth="1.700" /></svg>
              <MdSettings size={21} className="ml-[19px]" />
              <span className="absolute left-[99px] top-[-1px] flex h-[9px] w-[14px] items-center justify-center rounded-[1px] bg-[#e8112d] text-[7.500px] font-bold text-white">HD</span>
              <svg width="25" height="20" viewBox="0 0 25 20" className="ml-[18px]" fill="none"><rect x="1" y="1" width="23" height="18" rx="1.500" stroke="#eee" strokeWidth="2" /><path d="M11.500 9.500H20.500V15.500H11.500Z" fill="#eee" /></svg>
              <svg width="23" height="16" viewBox="0 0 23 16" className="ml-[16px]" fill="none"><rect x="1" y="1" width="21" height="14" stroke="#eee" strokeWidth="2" /></svg>
              <svg width="19" height="18" viewBox="0 0 19 18" className="ml-[19px]" fill="none"><path d="M1.200 6.500V1.200H7M12 1.200H17.800V6.500M17.800 11.500V16.800H12M7 16.800H1.200V11.500" stroke="#eee" strokeWidth="2.400" /></svg>
            </div>
          </div>
        </div>
        {/* related thumbnails */}
        <div className="flex w-[6px] flex-col">{strips.map((s, i) => <div key={i} className={"shrink-0 " + s} />)}</div>
      </div>
    </div>
  );
}
